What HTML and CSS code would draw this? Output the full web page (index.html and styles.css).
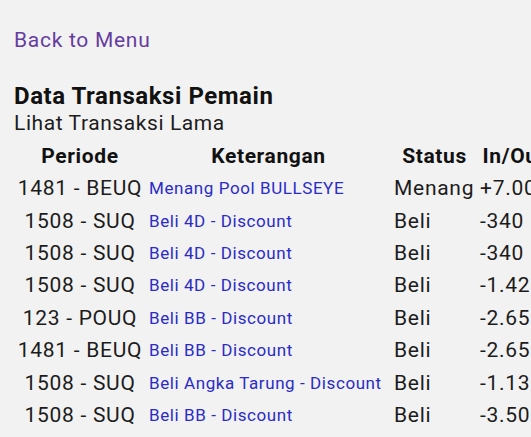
FILE: index.html
```html
<!DOCTYPE html>
<html>
<head>
<meta charset="utf-8">
<link rel="stylesheet" href="styles.css">
</head>
<body>
<div class="page">
  <a class="back" href="#">Back to Menu</a>
  <h1 class="title">Data Transaksi Pemain</h1>
  <div class="sub">Lihat Transaksi Lama</div>
  <table class="tx">
    <colgroup>
      <col class="c1"><col class="c2"><col class="c3"><col class="c4">
    </colgroup>
    <thead>
      <tr><th class="per">Periode</th><th>Keterangan</th><th>Status</th><th>In/Out</th></tr>
    </thead>
    <tbody>
      <tr><td class="per">1481 - BEUQ</td><td class="ket"><a href="#">Menang Pool BULLSEYE</a></td><td class="st">Menang</td><td class="amt">+7.000</td></tr>
      <tr><td class="per">1508 - SUQ</td><td class="ket"><a href="#">Beli 4D - Discount</a></td><td class="st">Beli</td><td class="amt">-340</td></tr>
      <tr><td class="per">1508 - SUQ</td><td class="ket"><a href="#">Beli 4D - Discount</a></td><td class="st">Beli</td><td class="amt">-340</td></tr>
      <tr><td class="per">1508 - SUQ</td><td class="ket"><a href="#">Beli 4D - Discount</a></td><td class="st">Beli</td><td class="amt">-1.420</td></tr>
      <tr><td class="per">123 - POUQ</td><td class="ket"><a href="#">Beli BB - Discount</a></td><td class="st">Beli</td><td class="amt">-2.650</td></tr>
      <tr><td class="per">1481 - BEUQ</td><td class="ket"><a href="#">Beli BB - Discount</a></td><td class="st">Beli</td><td class="amt">-2.650</td></tr>
      <tr><td class="per">1508 - SUQ</td><td class="ket"><a href="#">Beli Angka Tarung - Discount</a></td><td class="st">Beli</td><td class="amt">-1.130</td></tr>
      <tr><td class="per">1508 - SUQ</td><td class="ket"><a href="#">Beli BB - Discount</a></td><td class="st">Beli</td><td class="amt">-3.500</td></tr>
      <tr><td class="per">1481 - BEUQ</td><td class="ket"><a href="#">Beli BB - Discount</a></td><td class="st">Beli</td><td class="amt">-2.650</td></tr>
    </tbody>
  </table>
</div>
</body>
</html>
```

FILE: styles.css
```css
html, body {
  margin: 0;
  padding: 0;
  overflow: hidden;
  background: #f2f2f2;
}
body {
  font-family: Roboto, "Noto Sans", sans-serif;
  color: #1c1c1c;
}
.page {
  padding: 26px 0 0 14px;
  width: 620px;
}
.back {
  display: block;
  font-size: 21px;
  letter-spacing: 0.72px;
  line-height: 28px;
  color: #673c9f;
  text-decoration: none;
}
.title {
  margin: 28px 0 0 0;
  font-size: 24px;
  letter-spacing: 0.55px;
  line-height: 28px;
  font-weight: 700;
  color: #111;
}
.sub {
  font-size: 21px;
  letter-spacing: 0.58px;
  line-height: 26px;
}
.tx {
  border-collapse: collapse;
  table-layout: fixed;
  width: 550px;
  margin-top: 4px;
  margin-left: -14px;
}
.c1 { width: 146px; }
.c2 { width: 245px; }
.c3 { width: 87px; }
.c4 { width: 72px; }
.tx th {
  font-size: 21px;
  letter-spacing: 0.62px;
  font-weight: 700;
  text-align: center;
  padding: 4px 2px;
  line-height: 24px;
  color: #111;
  white-space: nowrap;
}
.tx th.per { padding-left: 16px; }
.tx td {
  font-size: 21px;
  letter-spacing: 0.72px;
  line-height: 24px;
  padding: 4px 2px;
  height: 24.4px;
  white-space: nowrap;
}
.tx td.per {
  text-align: center;
  padding-left: 16px;
}
.tx td.ket {
  font-size: 17px;
  letter-spacing: 0.58px;
  padding-left: 3px;
}
.tx td.ket a {
  color: #2b2bc8;
  text-decoration: none;
}
.tx td.st { padding-left: 3px; }
.tx td.amt { padding-left: 2px; }
```
